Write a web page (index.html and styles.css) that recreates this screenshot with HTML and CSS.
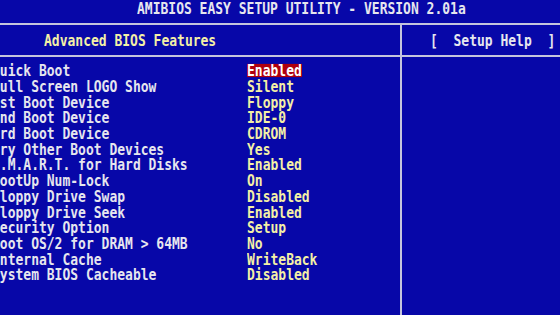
FILE: index.html
```html
<!DOCTYPE html>
<html>
<head>
<meta charset="utf-8">
<link rel="stylesheet" href="styles.css">
</head>
<body>
<div class="screen">
  <div class="title"><span class="txt">AMIBIOS EASY SETUP UTILITY - VERSION 2.01a</span></div>
  <div class="rule"></div>
  <div class="main">
    <div class="head-left"><span class="txt yellow">Advanced BIOS Features</span></div>
    <div class="vline"></div>
    <div class="head-right"><span class="txt">[  Setup Help  ]</span></div>
    <div class="hrule"></div>
    <div class="list">
      <div class="row"><span class="label">Quick Boot</span><span class="value sel">Enabled</span></div>
      <div class="row"><span class="label">Full Screen LOGO Show</span><span class="value">Silent</span></div>
      <div class="row"><span class="label">1st Boot Device</span><span class="value">Floppy</span></div>
      <div class="row"><span class="label">2nd Boot Device</span><span class="value">IDE-0</span></div>
      <div class="row"><span class="label">3rd Boot Device</span><span class="value">CDROM</span></div>
      <div class="row"><span class="label">Try Other Boot Devices</span><span class="value">Yes</span></div>
      <div class="row"><span class="label">S.M.A.R.T. for Hard Disks</span><span class="value">Enabled</span></div>
      <div class="row"><span class="label">BootUp Num-Lock</span><span class="value">On</span></div>
      <div class="row"><span class="label">Floppy Drive Swap</span><span class="value">Disabled</span></div>
      <div class="row"><span class="label">Floppy Drive Seek</span><span class="value">Enabled</span></div>
      <div class="row"><span class="label">Security Option</span><span class="value">Setup</span></div>
      <div class="row"><span class="label">Boot OS/2 for DRAM &gt; 64MB</span><span class="value">No</span></div>
      <div class="row"><span class="label">Internal Cache</span><span class="value">WriteBack</span></div>
      <div class="row"><span class="label">System BIOS Cacheable</span><span class="value">Disabled</span></div>
    </div>
    <div class="help"></div>
  </div>
</div>
</body>
</html>
```
FILE: styles.css
```css
html, body {
  margin: 0;
  padding: 0;
  background: #0707a8;
}
.screen {
  width: 560px;
  height: 315px;
  overflow: hidden;
  background: #0707a8;
  color: #e6e6ee;
  font-family: "DejaVu Sans Mono", "Liberation Mono", monospace;
  font-weight: bold;
  font-size: 13px;
  display: flex;
  flex-direction: column;
}
.txt {
  display: inline-block;
  transform: scaleY(1.2);
  white-space: pre;
  line-height: 11px;
  height: 11px;
}
.yellow { color: #f4f0a6; }
.title {
  height: 21px;
  padding-top: 2px;
  box-sizing: content-box;
  line-height: 11px;
}
.title .txt {
  margin-left: 137px;
  margin-top: 1px;
}
.rule {
  height: 2px;
  background: #c4c4dc;
}
.main {
  flex: 1;
  display: grid;
  grid-template-columns: 400px 2px 1fr;
  grid-template-rows: 30px 2px 1fr;
}
.head-left {
  grid-column: 1;
  grid-row: 1;
  padding-left: 44px;
  display: flex;
  align-items: center;
}
.head-right {
  grid-column: 3;
  grid-row: 1;
  padding-left: 28px;
  display: flex;
  align-items: center;
}
.vline {
  grid-column: 2;
  grid-row: 1 / 4;
  background: #c4c4dc;
}
.hrule {
  grid-column: 1 / 4;
  grid-row: 2;
  background: #c4c4dc;
}
.list {
  grid-column: 1;
  grid-row: 3;
  padding-top: 6px;
  margin-left: -8px;
  display: flex;
  flex-direction: column;
}
.row {
  height: 15.7px;
  display: flex;
  align-items: center;
  white-space: pre;
}
.label, .value {
  display: inline-block;
  transform: scaleY(1.2);
  line-height: 11px;
  height: 11px;
}
.label {
  width: 255px;
}
.value {
  color: #f4f0a6;
}
.value.sel {
  background: #b0000e;
  color: #ffffff;
}
```
